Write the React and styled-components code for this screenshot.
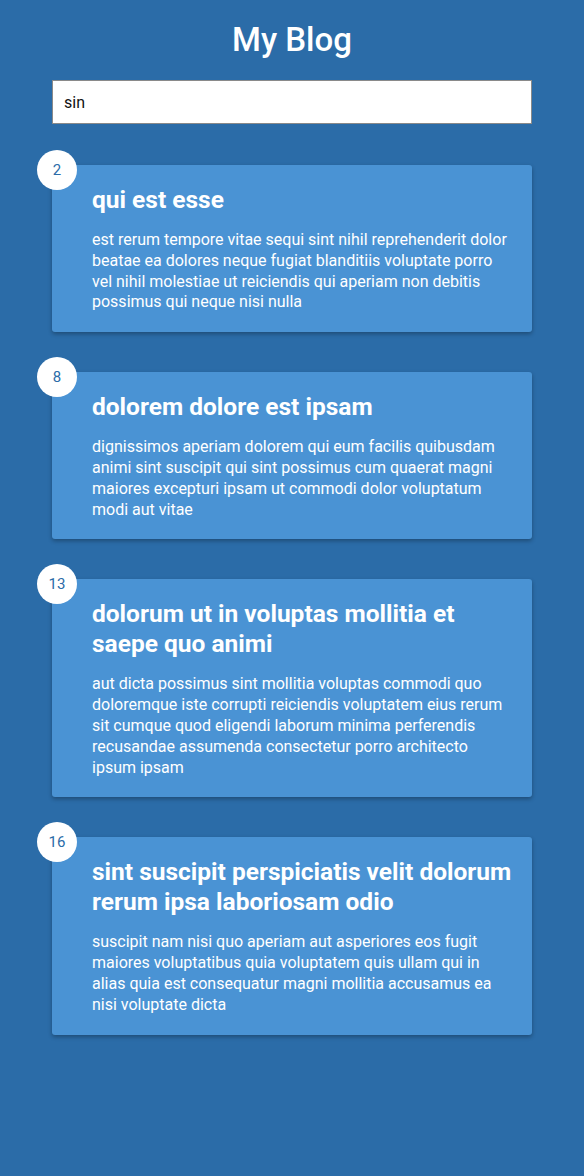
import React, { useState } from 'react';
import styled, { createGlobalStyle } from 'styled-components';

const colors = {
  page: '#2b6ca8',
  card: '#4a93d4',
  white: '#ffffff',
};

const GlobalStyle = createGlobalStyle`
  html, body {
    margin: 0;
    padding: 0;
    background-color: ${colors.page};
    font-family: Roboto, "Liberation Sans", sans-serif;
  }
  * {
    box-sizing: border-box;
  }
`;

const posts = [
  {
    id: 2,
    title: 'qui est esse',
    body: 'est rerum tempore vitae sequi sint nihil reprehenderit dolor beatae ea dolores neque fugiat blanditiis voluptate porro vel nihil molestiae ut reiciendis qui aperiam non debitis possimus qui neque nisi nulla',
  },
  {
    id: 8,
    title: 'dolorem dolore est ipsam',
    body: 'dignissimos aperiam dolorem qui eum facilis quibusdam animi sint suscipit qui sint possimus cum quaerat magni maiores excepturi ipsam ut commodi dolor voluptatum modi aut vitae',
  },
  {
    id: 13,
    title: 'dolorum ut in voluptas mollitia et saepe quo animi',
    body: 'aut dicta possimus sint mollitia voluptas commodi quo doloremque iste corrupti reiciendis voluptatem eius rerum sit cumque quod eligendi laborum minima perferendis recusandae assumenda consectetur porro architecto ipsum ipsam',
  },
  {
    id: 16,
    title: 'sint suscipit perspiciatis velit dolorum rerum ipsa laboriosam odio',
    body: 'suscipit nam nisi quo aperiam aut asperiores eos fugit maiores voluptatibus quia voluptatem quis ullam qui in alias quia est consequatur magni mollitia accusamus ea nisi voluptate dicta',
  },
];

const Page = styled.div`
  min-height: 1176px;
  padding-bottom: 40px;
  background-color: ${colors.page};
`;

const Container = styled.div`
  width: 480px;
  margin: 0 auto;
`;

const Title = styled.h1`
  margin: 0;
  padding: 20px 0;
  font-size: 33px;
  line-height: 40px;
  font-weight: 500;
  color: ${colors.white};
  text-align: center;
`;

const Search = styled.input`
  display: block;
  width: 100%;
  height: 44px;
  padding: 0 11px;
  font-family: Roboto, "Liberation Sans", sans-serif;
  font-size: 16px;
  color: #111;
  background-color: ${colors.white};
  border: 1px solid #8a8a8a;
  outline: none;
`;

const PostList = styled.ul`
  list-style: none;
  margin: 41px 0 0;
  padding: 0;
  display: flex;
  flex-direction: column;
  gap: 40px;
`;

const Post = styled.li`
  position: relative;
  padding: 20px 18px 19px 40px;
  color: ${colors.white};
  background-color: ${colors.card};
  border-radius: 3px;
  box-shadow: 0 2px 4px rgba(0, 0, 0, 0.3);

  h2 {
    margin: 0 0 15px;
    font-size: 24.5px;
    line-height: 30px;
    font-weight: 700;
  }

  p {
    margin: 0;
    font-size: 16px;
    line-height: 20.8px;
  }
`;

const Badge = styled.span`
  position: absolute;
  top: -15px;
  left: -15px;
  display: flex;
  align-items: center;
  justify-content: center;
  width: 40px;
  height: 40px;
  border-radius: 50%;
  font-size: 15px;
  color: ${colors.page};
  background-color: ${colors.white};
`;

const App = () => {
  const [query, setQuery] = useState('sin');

  return (
    <Page>
      <GlobalStyle />
      <Container>
        <Title>My Blog</Title>
        <Search value={query} onChange={e => setQuery(e.target.value)} />
        <PostList>
          {posts.map(post => (
            <Post key={post.id}>
              <Badge>{post.id}</Badge>
              <h2>{post.title}</h2>
              <p>{post.body}</p>
            </Post>
          ))}
        </PostList>
      </Container>
    </Page>
  );
};

export default App;
